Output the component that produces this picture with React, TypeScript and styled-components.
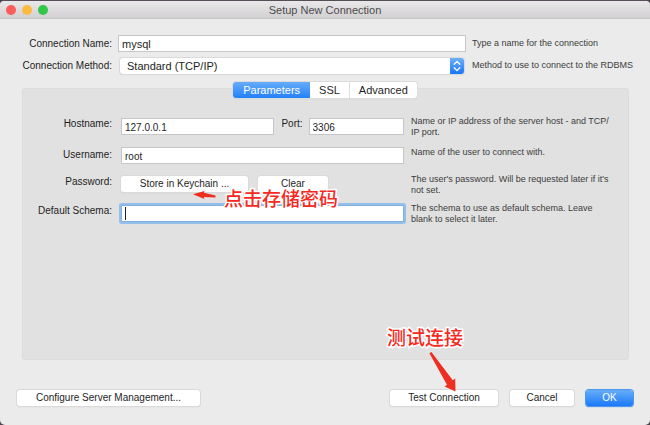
import React from "react";
import styled, { createGlobalStyle, css } from "styled-components";

const GlobalStyle = createGlobalStyle`
  * { box-sizing: border-box; }
  body {
    margin: 0;
    background: #4b444c;
    font-family: "Liberation Sans", Arial, "Noto Sans CJK SC", sans-serif;
    font-size: 11px;
    color: #1e1e1e;
  }
  button, input, select { font: inherit; color: inherit; margin: 0; }
`;

const Window = styled.main`
  display: flex;
  flex-direction: column;
  min-height: 100vh;
  border-top: 1px solid #564e57;
  border-radius: 5px;
  background: #ebebeb;
`;

const TitleBar = styled.header`
  display: grid;
  grid-template-columns: 1fr auto 1fr;
  align-items: center;
  height: 18px;
  padding: 0 6px;
  border-bottom: 1px solid #c8c6c8;
  border-radius: 4px 4px 0 0;
  background: linear-gradient(#e9e8e9, #d2d0d2);
`;

const Lights = styled.div`
  display: flex;
  gap: 6px;
`;

const Light = styled.button<{ $color: string }>`
  width: 10px;
  height: 10px;
  padding: 0;
  border: 0;
  border-radius: 50%;
  background: ${(p) => p.$color};
`;

const Title = styled.h1`
  margin: 0;
  font-size: 11px;
  font-weight: 400;
  line-height: 16px;
  color: #4c4a4c;
`;

const ConnectionForm = styled.section`
  display: grid;
  grid-template-columns: 112px 1fr 178px;
  column-gap: 6px;
  row-gap: 5px;
  align-items: center;
  padding: 16px 0 8px;
`;

const FormLabel = styled.label`
  font-size: 10px;
  text-align: right;
  line-height: 17px;
  white-space: nowrap;
`;

const Hint = styled.p<{ $single?: boolean }>`
  margin: 0;
  font-size: 9px;
  line-height: ${(p) => (p.$single ? 15 : 11)}px;
  color: #3c3c3c;
`;

const TextInput = styled.input<{ $focused?: boolean }>`
  display: block;
  width: 100%;
  min-width: 0;
  height: 17px;
  padding: 1px 3px 0;
  border: 1px solid #c6c6c6;
  border-radius: 0;
  background: #fff;
  outline: 0;
  ${(p) =>
    p.$focused &&
    css`
      border-color: #7fb0e0;
      box-shadow: 0 0 0 2px #94bfe8;
      border-radius: 1px;
    `}
`;

const SelectBox = styled.div`
  position: relative;
  margin: 0 2px;
  border-radius: 3px;
  box-shadow: 0 0 0 1px #dadada, 0 1px 1px #bcbcbc;
  overflow: hidden;
  height: 16px;
`;

const Select = styled.select`
  appearance: none;
  display: block;
  width: 100%;
  height: 16px;
  padding: 0 20px 0 7px;
  border: 0;
  border-radius: 3px;
  background: #fff;
  outline: 0;
`;

const Stepper = styled.svg`
  position: absolute;
  top: 0;
  right: 0;
  width: 14px;
  height: 16px;
  background: linear-gradient(#6bb1f9, #1b76f8);
  pointer-events: none;
`;

const Tabs = styled.div`
  position: relative;
  display: flex;
  align-self: center;
  margin-bottom: -10px;
  border-radius: 3px;
  background: #fff;
  box-shadow: 0 0 0 1px #dcdcdc, 0 1px 1px #b8b8b8;
`;

const Tab = styled.button<{ $active?: boolean }>`
  height: 16px;
  padding: 0 9px;
  border: 0;
  border-right: 1px solid #dedede;
  background: transparent;
  line-height: 16px;
  &:last-child { border-right: 0; }
  ${(p) =>
    p.$active &&
    css`
      padding: 0 10px;
      border-right: 0;
      border-radius: 3px 0 0 3px;
      background: linear-gradient(#66adfa, #2480fa);
      color: #fff;
    `}
`;

const Panel = styled.section`
  flex: 1;
  display: flex;
  flex-direction: column;
  gap: 7px;
  margin: 0 21px 0 22px;
  padding: 27px 17px 20px 0;
  border: 1px solid #dcdcdc;
  border-radius: 3px;
  background: #e1e1e1;
  font-size: 10px;
`;

const Row = styled.div`
  display: grid;
  grid-template-columns: 89px minmax(0, 1fr) 207px;
  min-height: 22px;
`;

const RowLabel = styled.label<{ $single?: boolean }>`
  line-height: ${(p) => (p.$single ? 19 : 15)}px;
  text-align: right;
  white-space: nowrap;
`;

const Controls = styled.div`
  position: relative;
  display: flex;
  gap: 10px;
  margin: 2px 0 0 9px;
`;

const AddressControls = styled(Controls)`
  gap: 7px;
`;

const RowHint = styled(Hint)`
  margin-left: 7px;
`;

const HostField = styled.div`
  flex: 154;
  min-width: 0;
`;

const PortField = styled.div`
  flex: 123;
  display: flex;
  gap: 6px;
  min-width: 0;
`;

const PortLabel = styled.label`
  line-height: 11px;
`;

const PushButton = styled.button<{ $primary?: boolean; $width: number }>`
  position: relative;
  width: ${(p) => p.$width}px;
  height: 16px;
  padding: 0;
  border: 0;
  border-radius: 3px;
  background: ${(p) => (p.$primary ? "linear-gradient(#66adfa, #1c79f9)" : "#fff")};
  box-shadow: 0 0 0 1px ${(p) => (p.$primary ? "#4b98f0" : "#dadada")},
    0 1px 1px ${(p) => (p.$primary ? "#2b74d0" : "#b4b4b4")};
  color: ${(p) => (p.$primary ? "#fff" : "inherit")};
  font-size: 10px;
  line-height: 16px;
  white-space: nowrap;
`;

const Caret = styled.span`
  position: absolute;
  left: 4px;
  top: 2px;
  width: 1px;
  height: 13px;
  background: #222;
`;

const Footer = styled.footer`
  display: flex;
  gap: 12px;
  padding: 30px 17px 19px;
`;

const Spacer = styled.div`
  flex: 1;
`;

const TestAction = styled.div`
  position: relative;
`;

const Note = styled.span`
  position: absolute;
  z-index: 2;
  font-family: "Noto Sans CJK SC", sans-serif;
  font-size: 19px;
  font-weight: 500;
  line-height: 24px;
  white-space: nowrap;
  color: #f5291d;
  -webkit-text-stroke: 3px #fff;
  paint-order: stroke fill;
  pointer-events: none;
`;

const PasswordNote = styled(Note)`
  left: 103px;
  top: 10px;
`;

const TestNote = styled(Note)`
  left: -3px;
  top: -65px;
`;

const Arrow = styled.svg`
  position: absolute;
  z-index: 2;
  fill: #ee2e20;
  overflow: visible;
  pointer-events: none;
`;

const PasswordArrow = styled(Arrow)`
  left: 72px;
  top: 15px;
`;

const TestArrow = styled(Arrow)`
  left: 39px;
  top: -38px;
`;

export default function App() {
  return (
    <>
      <GlobalStyle />
      <Window>
        <TitleBar>
          <Lights>
            <Light $color="#fb5d58" aria-label="Close" />
            <Light $color="#fdba3f" aria-label="Minimize" />
            <Light $color="#32c748" aria-label="Zoom" />
          </Lights>
          <Title>Setup New Connection</Title>
        </TitleBar>

        <ConnectionForm>
          <FormLabel htmlFor="name">Connection Name:</FormLabel>
          <TextInput id="name" defaultValue="mysql" />
          <Hint>Type a name for the connection</Hint>
          <FormLabel htmlFor="method">Connection Method:</FormLabel>
          <SelectBox>
            <Select id="method">
              <option>Standard (TCP/IP)</option>
            </Select>
            <Stepper viewBox="0 0 14 16" aria-hidden="true">
              <path
                d="M4.2 6.2 7 3.4l2.8 2.8M4.2 9.8 7 12.6l2.8-2.8"
                fill="none"
                stroke="#fff"
                strokeWidth="1.3"
                strokeLinecap="round"
                strokeLinejoin="round"
              />
            </Stepper>
          </SelectBox>
          <Hint>Method to use to connect to the RDBMS</Hint>
        </ConnectionForm>

        <Tabs role="tablist">
          <Tab role="tab" aria-selected="true" $active>Parameters</Tab>
          <Tab role="tab" aria-selected="false">SSL</Tab>
          <Tab role="tab" aria-selected="false">Advanced</Tab>
        </Tabs>

        <Panel role="tabpanel" aria-label="Parameters">
          <Row>
            <RowLabel htmlFor="host">Hostname:</RowLabel>
            <AddressControls>
              <HostField>
                <TextInput id="host" defaultValue="127.0.0.1" />
              </HostField>
              <PortField>
                <PortLabel htmlFor="port">Port:</PortLabel>
                <TextInput id="port" defaultValue="3306" />
              </PortField>
            </AddressControls>
            <RowHint>Name or IP address of the server host - and TCP/<wbr />IP port.</RowHint>
          </Row>
          <Row>
            <RowLabel htmlFor="user" $single>Username:</RowLabel>
            <Controls>
              <TextInput id="user" defaultValue="root" />
            </Controls>
            <RowHint $single>Name of the user to connect with.</RowHint>
          </Row>
          <Row>
            <RowLabel htmlFor="store">Password:</RowLabel>
            <Controls>
              <PushButton id="store" $width={127}>Store in Keychain ...</PushButton>
              <PushButton $width={70}>Clear</PushButton>
              <PasswordArrow width="23" height="8" viewBox="0 0 23 8" aria-hidden="true">
                <path d="M0 3.200 11.500 0l-.6 1.800L22.500 4.400v2L10.800 6l.6 2z" />
              </PasswordArrow>
              <PasswordNote>点击存储密码</PasswordNote>
            </Controls>
            <RowHint>The user's password. Will be requested later if it's not set.</RowHint>
          </Row>
          <Row>
            <RowLabel htmlFor="schema">Default Schema:</RowLabel>
            <Controls>
              <TextInput id="schema" defaultValue="" $focused />
              <Caret />
            </Controls>
            <RowHint>The schema to use as default schema. Leave blank to select it later.</RowHint>
          </Row>
        </Panel>

        <Footer>
          <PushButton $width={183}>Configure Server Management...</PushButton>
          <Spacer />
          <TestAction>
            <PushButton $width={108}>Test Connection</PushButton>
            <TestNote>测试连接</TestNote>
            <TestArrow width="27" height="40" viewBox="0 0 27 40" aria-hidden="true">
              <path d="M.4 1.200 2.400 0 23.800 28.200l2.400-1.700L26.500 39.500 15.600 34.600l2.400-1.800z" />
            </TestArrow>
          </TestAction>
          <PushButton $width={64}>Cancel</PushButton>
          <PushButton $width={47} $primary>OK</PushButton>
        </Footer>
      </Window>
    </>
  );
}
